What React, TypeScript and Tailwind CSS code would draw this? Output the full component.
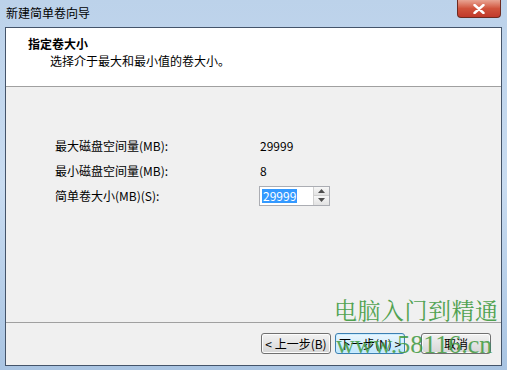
import React from "react";

const cjk = "font-['SimSun','Noto_Sans_CJK_SC',sans-serif]";

const Row: React.FC<{ label: string; children: React.ReactNode }> = ({
  label,
  children,
}) => (
  <div className="flex h-[25px] items-center">
    <span className="w-[210px] pl-[49px] text-[12px] leading-none text-black">
      {label}
    </span>
    {children}
  </div>
);

const Button: React.FC<{ label: string; primary?: boolean; className?: string }> = ({
  label,
  primary,
  className,
}) => (
  <button
    className={
      "flex h-[21px] w-[70px] items-center justify-center rounded-[3px] border text-[12px] leading-none text-black " +
      (primary
        ? "border-[#3c7fb1] bg-gradient-to-b from-[#eaf6fd] to-[#bee6fd] shadow-[inset_0_0_0_1px_#c9ecff]"
        : "border-[#707070] bg-gradient-to-b from-[#f2f2f2] to-[#d6d6d6] shadow-[inset_0_0_0_1px_#fcfcfc]") +
      " " +
      (className ?? "")
    }
  >
    {label}
  </button>
);

export default function App() {
  return (
    <div
      className={`relative flex h-[370px] w-[507px] flex-col overflow-hidden bg-gradient-to-b from-[#bcd2ea] via-[#c9dcf1] to-[#a9c4e2] ${cjk}`}
    >
      {/* title bar */}
      <div className="flex h-[27px] shrink-0 items-start">
        <span className="pl-[6px] pt-[7px] text-[12px] leading-none text-black">
          新建简单卷向导
        </span>
        <div className="ml-auto mr-[6px] flex h-[18px] w-[44px] items-center justify-center rounded-b-[4px] border border-t-0 border-[#6d2a20] bg-gradient-to-b from-[#e8a493] via-[#d0533c] to-[#c0392b]">
          <svg width="12" height="10" viewBox="0 0 12 10">
            <path
              d="M1.5 1 L10.5 9 M10.5 1 L1.5 9"
              stroke="#ffffff"
              strokeWidth="2.4"
              strokeLinecap="round"
            />
          </svg>
        </div>
      </div>

      {/* client area */}
      <div className="ml-[5px] mr-[5px] flex h-[339px] flex-col border border-[#44546a] bg-[#f0f0f0]">
        <div className="flex h-[59px] flex-col border-b border-[#a0a0a0] bg-white">
          <span className="pl-[22px] pt-[10px] text-[12px] font-bold leading-none text-black">
            指定卷大小
          </span>
          <span className="pl-[44px] pt-[5px] text-[12px] leading-none text-black">
            选择介于最大和最小值的卷大小。
          </span>
        </div>

        <div className="flex flex-1 flex-col pt-[46px]">
          <Row label="最大磁盘空间量(MB):">
            <span className="pl-[44px] text-[12px] leading-none">29999</span>
          </Row>
          <Row label="最小磁盘空间量(MB):">
            <span className="pl-[44px] text-[12px] leading-none">8</span>
          </Row>
          <Row label="简单卷大小(MB)(S):">
            <div className="ml-[43px] flex h-[20px] w-[71px] items-center border border-[#abadb3] bg-white">
              <span className="ml-[2px] bg-[#3399ff] px-[1px] text-[12px] leading-[14px] text-white">
                29999
              </span>
              <div className="ml-auto flex h-full w-[16px] flex-col border-l border-[#d0d0d0]">
                <div className="flex flex-1 items-center justify-center border-b border-[#cfcfcf] bg-gradient-to-b from-[#f7f7f7] to-[#e2e2e2]">
                  <svg width="7" height="4" viewBox="0 0 7 4">
                    <path d="M0 4 L3.5 0 L7 4 Z" fill="#4d4d4d" />
                  </svg>
                </div>
                <div className="flex flex-1 items-center justify-center bg-gradient-to-b from-[#f7f7f7] to-[#e2e2e2]">
                  <svg width="7" height="4" viewBox="0 0 7 4">
                    <path d="M0 0 L3.5 4 L7 0 Z" fill="#4d4d4d" />
                  </svg>
                </div>
              </div>
            </div>
          </Row>
        </div>

        <div className="flex h-[43px] items-center border-t border-[#a0a0a0] pb-[1px]">
          <Button label="< 上一步(B)" className="ml-[255px]" />
          <Button label="下一步(N) >" primary className="ml-[4px]" />
          <Button label="取消" className="ml-[16px]" />
        </div>
      </div>

      {/* watermark */}
      <div className="pointer-events-none absolute left-[334px] top-[298px] text-[23px] leading-none tracking-[0.5px] text-[#3f9a3f] opacity-90 font-['Noto_Serif_CJK_SC','Noto_Sans_CJK_SC',serif]">
        电脑入门到精通
      </div>
      <div className="pointer-events-none absolute left-[336px] top-[332px] text-[26px] leading-none text-[#3f9a3f] opacity-85 font-['Liberation_Serif',serif]">
        www.58116.cn
      </div>
    </div>
  );
}
